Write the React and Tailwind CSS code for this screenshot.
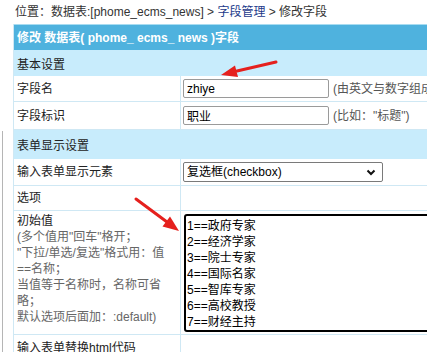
import React from 'react';

const font = "font-['Liberation_Sans','Noto_Sans_CJK_SC',sans-serif]";

const Row = ({ label, h, children, className = '' }) => (
  <div className={`flex border-b border-[#cfe8f4] ${h} ${className}`}>
    <div className="w-[167px] shrink-0 border-r border-[#cfe8f4] pl-[3px] flex items-center text-[#222]">
      {label}
    </div>
    <div className="flex-1 flex items-center pl-[2px]">{children}</div>
  </div>
);

const Section = ({ children, h, pt }) => (
  <div className={`flex items-center bg-[#c8ecfc] pl-[3px] text-[#222] ${h} ${pt}`}>{children}</div>
);

const Arrows = () => (
  <svg className="absolute left-0 top-0 pointer-events-none" width="427" height="352">
    <line x1="276" y1="62" x2="237" y2="71" stroke="#e5201d" strokeWidth="3" strokeLinecap="round" />
    <polygon points="221,75 235,65.5 238,77" fill="#e5201d" />
    <line x1="136" y1="199" x2="167" y2="222" stroke="#e5201d" strokeWidth="3" strokeLinecap="round" />
    <polygon points="179,231 162.5,226.5 170,216.5" fill="#e5201d" />
  </svg>
);

const options = ['1==政府专家', '2==经济学家', '3==院士专家', '4==国际名家', '5==智库专家', '6==高校教授', '7==财经主持'];

export default function App() {
  return (
    <div className={`relative w-[427px] h-[352px] overflow-hidden bg-white text-[12px] ${font}`}>
      <div className="absolute left-[2px] top-[131px] w-px h-[221px] bg-[#b5b5b5]" />

      <div className="h-[24px] pl-[15px] flex items-center text-[#333] whitespace-nowrap">
        位置：数据表:[phome_ecms_news] &gt;&nbsp;<a className="text-[#1d3a8a]">字段管理</a>&nbsp;&gt; 修改字段
      </div>

      <div className="ml-[13px] w-[500px] border-l border-[#cfe8f4]">
        <div className="h-[26px] bg-[#4fb2de] border-t border-[#a8dcf1] flex items-center pl-[3px] font-bold text-white whitespace-nowrap">
          修改 数据表( phome_ ecms_ news )字段
        </div>

        <Section h="h-[26px]" pt="pt-[4px]">基本设置</Section>

        <Row label="字段名" h="h-[26px]">
          <input
            defaultValue="zhiye"
            className="w-[146px] h-[19px] border border-[#9a9a9a] rounded-[2px] px-[3px] text-[12px] text-black outline-none"
          />
          <span className="ml-[4px] text-[#555] whitespace-nowrap">(由英文与数字组成，且不能以数字开头)</span>
        </Row>

        <Row label="字段标识" h="h-[28px]">
          <input
            defaultValue="职业"
            className="w-[146px] h-[19px] border border-[#9a9a9a] rounded-[2px] px-[3px] text-[12px] text-black outline-none"
          />
          <span className="ml-[4px] text-[#555] whitespace-nowrap">(比如："标题")</span>
        </Row>

        <Section h="h-[29px]" pt="pt-[2px]">表单显示设置</Section>

        <Row label="输入表单显示元素" h="h-[27px]">
          <div className="relative">
            <select className="appearance-none w-[200px] h-[20px] border border-[#7a7a7a] rounded-[2px] pl-[3px] text-[12px] text-black bg-white outline-none">
              <option>复选框(checkbox)</option>
            </select>
            <svg className="absolute right-[7px] top-[7px]" width="10" height="7" viewBox="0 0 10 7">
              <path d="M1.5 1.5l3.5 3.5 3.5-3.5" fill="none" stroke="#111" strokeWidth="2" />
            </svg>
          </div>
        </Row>

        <Row label="选项" h="h-[25px]" />

        <div className="flex border-b border-[#cfe8f4] h-[124px]">
          <div className="w-[167px] shrink-0 border-r border-[#cfe8f4] pl-[3px] pt-[2px] leading-[16px] whitespace-nowrap">
            <div className="text-[#222]">初始值</div>
            <div className="text-[#666]">
              (多个值用"回车"格开；<br />
              "下拉/单选/复选"格式用：值<br />
              ==名称；<br />
              当值等于名称时，名称可省<br />
              略；<br />
              默认选项后面加：:default)
            </div>
          </div>
          <div className="flex-1 pl-[3px] pt-[3px]">
            <div className="w-[260px] h-[118px] border-2 border-black rounded-[3px] pl-[1px] pt-[2px] leading-[16px] text-black">
              {options.map((o) => (
                <div key={o}>{o}</div>
              ))}
            </div>
          </div>
        </div>

        <Row label="输入表单替换html代码" h="h-[26px]" />
      </div>

      <Arrows />
    </div>
  );
}
